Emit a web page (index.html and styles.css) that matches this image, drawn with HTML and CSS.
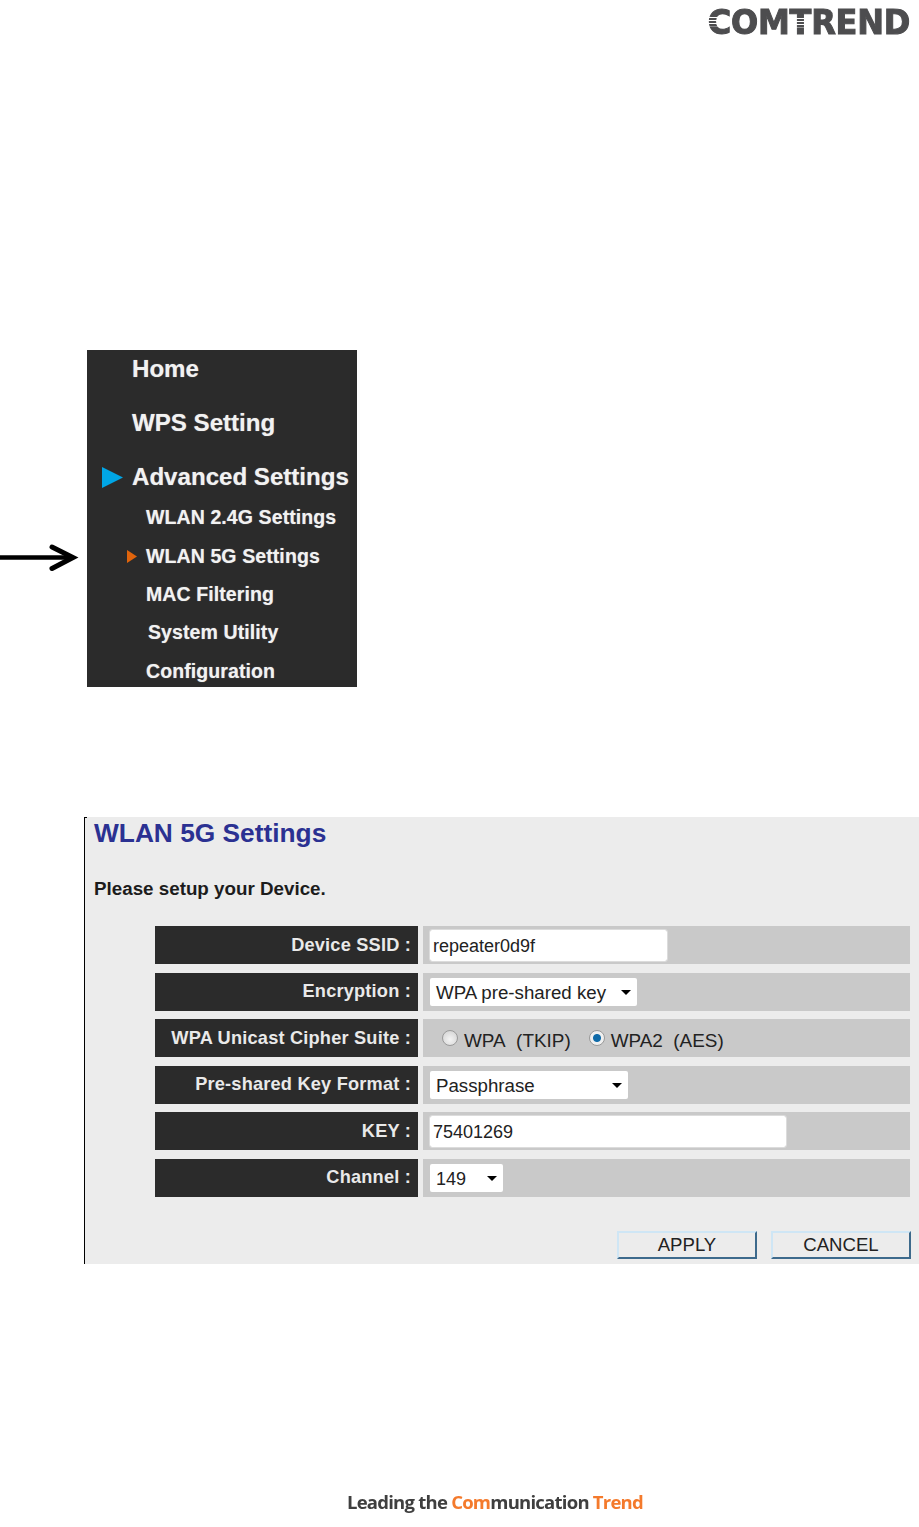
FILE: index.html
```html
<!DOCTYPE html>
<html lang="en">
<head>
  <meta charset="UTF-8">
  <meta name="viewport" content="width=device-width, initial-scale=1.0">
  <title>WLAN 5G Settings</title>

  <link rel="stylesheet" href="styles.css">
</head>

<body>
  <div class="header">
    <div class="logo">COMTREND<span class="logo-lines logo-lines-c"></span><span class="logo-lines logo-lines-t"></span></div>
  </div>

  <div class="menu-row">
    <svg class="arrow" width="87" height="30" viewBox="0 0 87 30">
      <path d="M0 13.5H72" stroke="#000" stroke-width="4.5" fill="none"/>
      <path d="M52 3L73 13.5L52 24.5" stroke="#000" stroke-width="5" stroke-linecap="round" fill="none"/>
    </svg>
    <ul class="menu">
      <li class="menu-item item-home"><span class="slot"></span>Home</li>
      <li class="menu-item item-wps"><span class="slot"></span>WPS Setting</li>
      <li class="menu-item item-adv"><span class="slot"><svg width="21" height="21" viewBox="0 0 21 21"><path d="M0 0L21 10.5L0 21Z" fill="#00a6e6"/></svg></span>Advanced Settings</li>
      <li class="sub-item"><span class="sub-slot"></span>WLAN 2.4G Settings</li>
      <li class="sub-item"><span class="sub-slot"><svg width="10" height="13" viewBox="0 0 10 13"><path d="M0 0L10 6.5L0 13Z" fill="#e0640c"/></svg></span>WLAN 5G Settings</li>
      <li class="sub-item"><span class="sub-slot"></span>MAC Filtering</li>
      <li class="sub-item item-system"><span class="sub-slot"></span>System Utility</li>
      <li class="sub-item"><span class="sub-slot"></span>Configuration</li>
    </ul>
  </div>

  <div class="panel">
    <h1>WLAN 5G Settings</h1>
    <p class="intro">Please setup your Device.</p>

    <div class="rows">
      <div class="row">
        <div class="label">Device SSID :</div>
        <div class="value"><input class="field field-ssid" type="text" value="repeater0d9f"></div>
      </div>
      <div class="row">
        <div class="label">Encryption :</div>
        <div class="value"><div class="select select-enc">WPA pre-shared key</div></div>
      </div>
      <div class="row">
        <div class="label">WPA Unicast Cipher Suite :</div>
        <div class="value value-radios">
          <span class="radio"></span><span class="radio-text">WPA&nbsp; (TKIP)</span>
          <span class="radio radio-on"></span><span class="radio-text">WPA2&nbsp; (AES)</span>
        </div>
      </div>
      <div class="row">
        <div class="label">Pre-shared Key Format :</div>
        <div class="value"><div class="select select-format">Passphrase</div></div>
      </div>
      <div class="row">
        <div class="label">KEY :</div>
        <div class="value"><input class="field field-key" type="text" value="75401269"></div>
      </div>
      <div class="row">
        <div class="label">Channel :</div>
        <div class="value"><div class="select select-channel">149</div></div>
      </div>
    </div>

    <div class="buttons">
      <button class="btn">APPLY</button>
      <button class="btn">CANCEL</button>
    </div>
  </div>

  <div class="footer">Leading the <span class="orange">Com</span>munication <span class="orange">Trend</span></div>
</body>
</html>
```

FILE: styles.css
```css
html, body {
  margin: 0;
  padding: 0;
}

body {
  height: 1527px;
  overflow: hidden;
  background: #fff;
  font-family: "Liberation Sans", Arial, sans-serif;
  display: flex;
  flex-direction: column;
}

.header {
  display: flex;
  justify-content: flex-end;
  padding: 0 9px 0 0;
  height: 350px;
}

.logo {
  position: relative;
  height: 44px;
  line-height: 44px;
  font-family: "DejaVu Sans", sans-serif;
  font-size: 32px;
  font-weight: bold;
  letter-spacing: -0.25px;
  color: #4d4d4f;
  -webkit-text-stroke: 1px #4d4d4f;
  transform: scaleY(1.08);
}

.logo-lines {
  position: absolute;
  height: 9px;
  background: repeating-linear-gradient(to bottom, #fff 0, #fff 1px, transparent 1px, transparent 3px);
}

.logo-lines-c {
  left: 0;
  width: 14px;
  top: 17px;
}

.logo-lines-t {
  left: 88px;
  width: 9px;
  top: 18px;
}

.menu-row {
  display: flex;
  align-items: flex-start;
}

.arrow {
  margin-top: 194px;
  flex-shrink: 0;
}

.menu {
  list-style: none;
  margin: 0;
  padding: 0;
  width: 270px;
  height: 337px;
  background: #2b2b2b;
  color: #f2f2f2;
  font-weight: bold;
  overflow: hidden;
  text-shadow: 0 0 1px rgba(255, 255, 255, 0.5);
}

.menu-item {
  display: flex;
  align-items: center;
  height: 54px;
  font-size: 24.1px;
  white-space: nowrap;
}

.item-home {
  height: 37px;
}

.item-wps {
  margin-top: 9px;
}

.item-adv {
  margin-bottom: -5.5px;
}

.slot {
  width: 45px;
  padding-left: 15px;
  box-sizing: border-box;
  display: flex;
  flex-shrink: 0;
}

.sub-item {
  display: flex;
  align-items: center;
  height: 38.4px;
  font-size: 19.5px;
  letter-spacing: 0.1px;
  white-space: nowrap;
}

.sub-slot {
  width: 59px;
  padding-left: 40px;
  box-sizing: border-box;
  display: flex;
  flex-shrink: 0;
}

.item-system .sub-slot {
  width: 61px;
}

.panel {
  margin: 130px 0 0 84px;
  height: 447px;
  box-sizing: border-box;
  background: #ececec;
  border-left: 1px solid #000;
  padding: 0 9px 0 9px;
  position: relative;
}

.panel::before {
  content: "";
  position: absolute;
  left: 0;
  top: 0;
  width: 2px;
  height: 1px;
  background: #000;
}

.panel h1 {
  margin: 0;
  height: 34px;
  line-height: 32px;
  font-size: 26.3px;
  font-weight: bold;
  color: #2b3192;
}

.intro {
  margin: 24px 0 0;
  height: 27px;
  line-height: 27px;
  font-size: 18.8px;
  font-weight: bold;
  color: #1c1c1c;
}

.rows {
  margin: 24px 0 0 61px;
  display: flex;
  flex-direction: column;
  gap: 8.6px;
}

.row {
  display: flex;
  gap: 5px;
  height: 38px;
}

.label {
  width: 263px;
  box-sizing: border-box;
  padding: 0 7px 0 0;
  background: #2b2b2b;
  color: #e9e9e9;
  font-size: 18.2px;
  font-weight: bold;
  letter-spacing: 0.2px;
  display: flex;
  align-items: center;
  justify-content: flex-end;
  white-space: nowrap;
}

.value {
  flex: 1;
  background: #c9c9c9;
  display: flex;
  align-items: center;
  padding-left: 7px;
  color: #222;
}

.field {
  box-sizing: border-box;
  height: 31px;
  border: none;
  border-radius: 2px;
  background: #fff;
  padding: 2px 3px 0;
  font-family: inherit;
  font-size: 18px;
  color: #222;
  outline: 1px solid #dcdcdc;
}

.field-ssid {
  width: 237px;
}

.field-key {
  width: 356px;
}

.select {
  position: relative;
  box-sizing: border-box;
  height: 28px;
  line-height: 30px;
  background: #fff;
  border-radius: 2px;
  padding-left: 6px;
  font-size: 18.7px;
  white-space: nowrap;
}

.select::after {
  content: "";
  position: absolute;
  right: 6px;
  top: 12px;
  border-left: 5.5px solid transparent;
  border-right: 5.5px solid transparent;
  border-top: 5.5px solid #000;
}

.select-enc {
  width: 207px;
}

.select-format {
  width: 198px;
}

.select-channel {
  width: 73px;
  font-size: 18px;
}

.value-radios {
  padding-left: 19px;
}

.radio {
  width: 16px;
  height: 16px;
  border-radius: 50%;
  box-sizing: border-box;
  border: 1px solid #9a9a9a;
  background: radial-gradient(circle at 50% 60%, #f4f4f4, #cfcfcf);
  flex-shrink: 0;
}

.radio-on {
  background: radial-gradient(circle, #0f6aa8 0, #0f6aa8 3.5px, #f0f0f0 4.5px);
  margin-left: 18px;
}

.radio-text {
  margin-left: 6px;
  padding-top: 6px;
  font-size: 18.9px;
  white-space: nowrap;
}

.buttons {
  display: flex;
  justify-content: flex-end;
  gap: 14px;
  margin: 34px -1px 0 0;
}

.btn {
  width: 140px;
  height: 28px;
  box-sizing: border-box;
  padding: 0;
  background: #ececec;
  border-style: solid;
  border-width: 2px;
  border-color: #cfe6f5 #3d6a8c #3d6a8c #cfe6f5;
  font-family: inherit;
  font-size: 18.6px;
  color: #222;
}

.footer {
  margin-top: 225px;
  padding-left: 347px;
  font-family: "Open Sans", sans-serif;
  font-weight: 700;
  font-size: 18.5px;
  line-height: 26px;
  letter-spacing: -0.76px;
  color: #3f3f3f;
  filter: blur(0.5px);
}

.orange {
  color: #f47a2c;
}
```
